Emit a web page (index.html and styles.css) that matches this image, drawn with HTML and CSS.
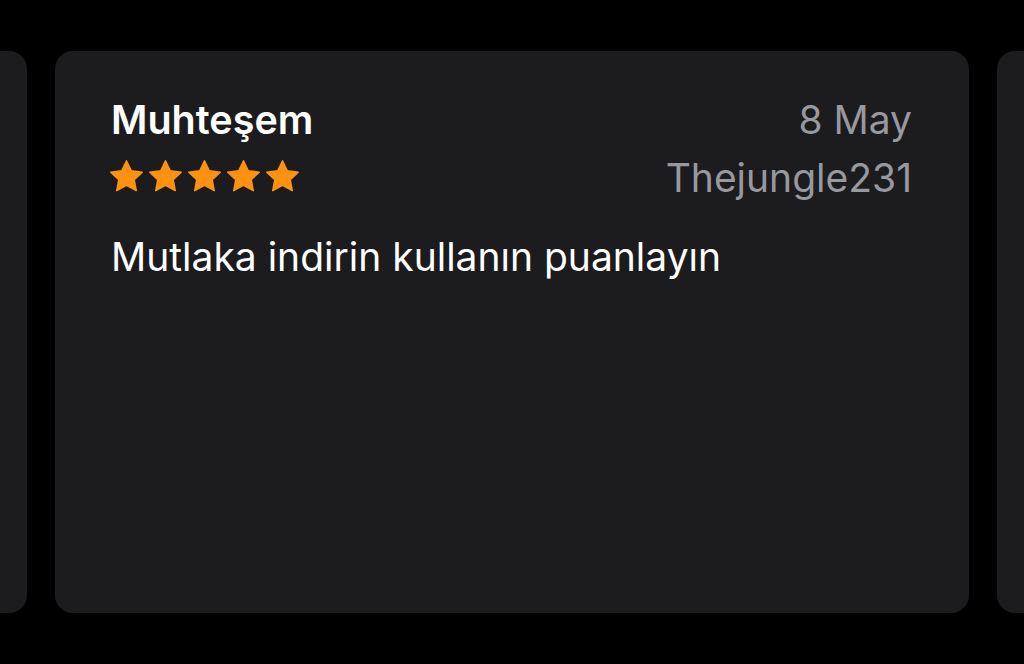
FILE: index.html
```html
<!DOCTYPE html>
<html lang="tr">
<head>
    <meta charset="UTF-8">
    <meta name="viewport" content="width=device-width, initial-scale=1.0">
    <title>Reviews</title>
    <link rel="stylesheet" href="styles.css">
</head>
<body>
    <div class="reviews">
        <div class="review-card"></div>

        <div class="review-card">
            <div class="review-header">
                <div class="review-left">
                    <div class="review-title">Muhteşem</div>
                    <div class="stars">
                        <svg viewBox="0 0 24 24"><path d="M12 1.2l3.3 6.9 7.5.9-5.5 5.2 1.4 7.5L12 18l-6.7 3.7 1.4-7.5L1.2 9l7.5-.9z"/></svg>
                        <svg viewBox="0 0 24 24"><path d="M12 1.2l3.3 6.9 7.5.9-5.5 5.2 1.4 7.5L12 18l-6.7 3.7 1.4-7.5L1.2 9l7.5-.9z"/></svg>
                        <svg viewBox="0 0 24 24"><path d="M12 1.2l3.3 6.9 7.5.9-5.5 5.2 1.4 7.5L12 18l-6.7 3.7 1.4-7.5L1.2 9l7.5-.9z"/></svg>
                        <svg viewBox="0 0 24 24"><path d="M12 1.2l3.3 6.9 7.5.9-5.5 5.2 1.4 7.5L12 18l-6.7 3.7 1.4-7.5L1.2 9l7.5-.9z"/></svg>
                        <svg viewBox="0 0 24 24"><path d="M12 1.2l3.3 6.9 7.5.9-5.5 5.2 1.4 7.5L12 18l-6.7 3.7 1.4-7.5L1.2 9l7.5-.9z"/></svg>
                    </div>
                </div>
                <div class="review-right">
                    <div class="review-date">8 May</div>
                    <div class="review-author">Thejungle231</div>
                </div>
            </div>
            <div class="review-body">Mutlaka indirin kullanın puanlayın</div>
        </div>

        <div class="review-card"></div>
    </div>
</body>
</html>
```

FILE: styles.css
```css
body {
    margin: 0;
    background-color: #000;
    font-family: Inter, "Open Sans", sans-serif;
    color: #fff;
    overflow: hidden;
}
.reviews {
    display: flex;
    justify-content: center;
    gap: 28px;
    padding-top: 51px;
    height: 664px;
    box-sizing: border-box;
}
.review-card {
    flex: 0 0 914px;
    height: 562px;
    background-color: #1c1c1e;
    border-radius: 18px;
    padding: 42px 57px 0 54px;
    box-sizing: border-box;
}
.review-header {
    display: flex;
    justify-content: space-between;
}
.review-title {
    font-size: 39.5px;
    font-weight: 600;
    line-height: 54px;
    padding-left: 2px;
}
.stars {
    display: flex;
    gap: 4px;
    margin-top: 12px;
}
.stars svg {
    width: 35px;
    height: 35px;
    fill: #fd9212;
    stroke: #fd9212;
    stroke-width: 1;
    stroke-linejoin: round;
}
.review-right {
    text-align: right;
    color: #98989f;
    font-size: 39px;
    line-height: 58px;
    margin-top: -2px;
}
.review-body {
    margin-top: 28px;
    padding-left: 2px;
    font-size: 39px;
    line-height: 44px;
}
```
